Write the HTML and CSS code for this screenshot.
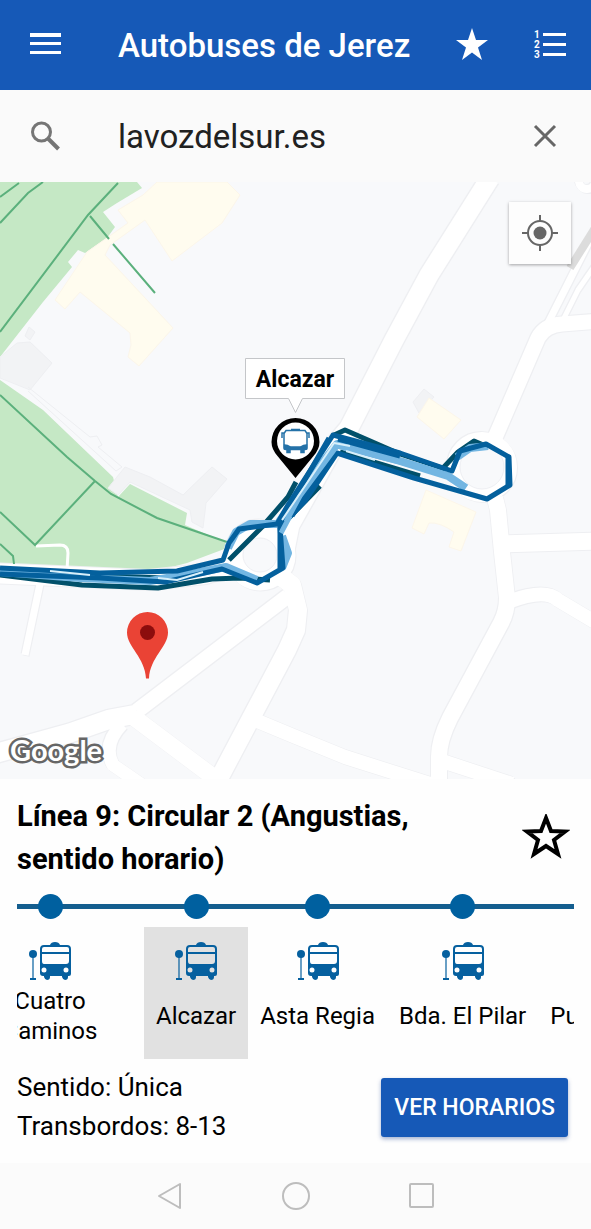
FILE: index.html
```html
<!DOCTYPE html>
<html lang="es">
<head>
  <meta charset="UTF-8">
  <meta name="viewport" content="width=device-width, initial-scale=1.0">
  <title>Autobuses de Jerez</title>
  <link rel="stylesheet" href="styles.css">
</head>
<body>
  <!-- Shared icons -->
  <svg class="sprite" aria-hidden="true">
    <symbol id="bus-stop" viewBox="0 0 42 38">
      <circle cx="4" cy="12" r="4"/>
      <path d="M3.400 14h1.200v22h-1.200zM1 36h6v2H1z"/>
      <path fill-rule="evenodd" d="M21 3q1-3 5-3t5 3h7q4 0 4 4v25q0 2-2 2h-1v1q0 3-3 3-2 0-3-3v-1H21v1q0 3-3 3-2 0-3-3v-1h-1q-3 0-3-3V7q0-4 4-4zM15 5q-2 0-2 2v3h27V7q0-2-2-2zM13 12v7q0 3 2 3h22q3 0 3-3v-7zM15 25.500a2.500 2.500 0 1 0 0 5 2.500 2.500 0 0 0 0-5zM37 25.500a2.500 2.500 0 1 0 0 5 2.500 2.500 0 0 0 0-5z"/>
    </symbol>
  </svg>

  <div class="app">
    <header class="topbar">
      <button type="button" class="icon-btn" aria-label="Menú">
        <svg width="32" height="32" viewBox="0 0 32 32"><path fill="currentColor" d="M0 4h31v4H0zM0 13h31v3H0zM0 22h31v3H0z"/></svg>
      </button>
      <h1>Autobuses de Jerez</h1>
      <button type="button" class="icon-btn" aria-label="Favoritos">
        <svg width="34" height="34" viewBox="0 1 34 34"><path fill="currentColor" d="M17 1l4 12 12 0-10 7.500 4 12.500-10-7.600L7 33l4-12.500L1 13h12z"/></svg>
      </button>
      <button type="button" class="icon-btn" aria-label="Líneas">
        <svg width="34" height="32" viewBox="0 1 34 32">
          <path fill="currentColor" d="M10 5h23v3H10zM10 15h23v3H10zM10 25h23v3H10z"/>
          <g class="list-digits"><text x="1" y="10">1</text><text x="1" y="20">2</text><text x="1" y="30">3</text></g>
        </svg>
      </button>
    </header>

    <form class="search">
      <label for="search" aria-label="Buscar">
        <svg width="32" height="32" viewBox="0 0 32 32" fill="none" stroke="#757575" stroke-width="3"><circle cx="11.500" cy="12" r="9"/><path stroke-width="4" d="M18 18.500l10.500 10.500"/></svg>
      </label>
      <input type="text" id="search" value="lavozdelsur.es">
      <button type="button" class="icon-btn" aria-label="Borrar">
        <svg width="24" height="24" viewBox="0 0 24 24" fill="none" stroke="#666" stroke-width="3"><path d="M2 2l20 20M22 2L2 22"/></svg>
      </button>
    </form>

    <main class="map">
      <svg class="map-canvas" viewBox="0 182 591 597" preserveAspectRatio="xMidYMid slice" role="img" aria-label="Mapa de la línea">
        <defs>
          <g id="roads">
            <path stroke-width="19" d="M490 178L429 275 394 340 349 428 334 446 290 525 283 560"/>
            <path stroke-width="18" d="M275 572L292 585 298 610 296 630 287 650 250 720 213 790"/>
            <path stroke-width="15" d="M288 596L137 711"/>
            <path stroke-width="19" d="M137 714L110 719 70 733-10 755"/>
            <path stroke-width="17" d="M132 716L212 776"/>
            <path stroke-width="13" d="M122 724Q102 745 113 765L145 787"/>
            <path stroke-width="14" d="M255 720L291 735 345 757 430 784"/>
            <path stroke-width="15" d="M494 440L538 338Q545 325 562 324L600 321"/>
            <path stroke-width="16" d="M495 498L498 510 502 552 507 598Q507 612 501 623L450 718Q439 740 439 757V790"/>
            <path stroke-width="17" d="M502 544L600 541"/>
            <path stroke-width="14" d="M508 602Q545 588 558 600L600 625"/>
            <path stroke-width="14" d="M442 761L512 784"/>
            <path stroke-width="7" d="M547 325L595 230M40 584L25 655"/>
            <path stroke-width="5" d="M564 318L578 290 600 258"/>
            <path stroke-width="20" d="M-10 573L150 580 205 574 240 563"/>
            <circle cx="260" cy="555" r="26" stroke-width="19"/>
            <circle cx="482" cy="467" r="28" stroke-width="14"/>
            <circle cx="587" cy="181" r="8" stroke-width="8"/>
          </g>
        </defs>

        <rect class="land" y="182" width="591" height="597"/>

        <!-- Parks and paths -->
        <g class="park">
          <path d="M0 182H137L142 188 117 203 103 212 115 227 107 238 85 253 78 250 68 262 72 267 43 302 0 357z"/>
          <path d="M0 380L43 410 113 477 118 497 130 484 187 513 185 525 227 543 227 548 187 563 160 570 0 566z"/>
        </g>

        <!-- Buildings -->
        <g class="block">
          <path d="M0 357L17 343 30 342 52 363 30 390 0 378zM25 336L29 327 35 332 30 340z"/>
          <path d="M108 488L125 467 150 477 183 495 212 467 227 479 206 503 203 528 192 522 190 510 130 482 118 495z"/>
          <path d="M413 402L424 389 434 397 419 413z"/>
          <path class="wall" d="M28 387L90 437 97 436 102 445 98 447 122 467 116 471 28 391"/>
        </g>
        <g class="building">
          <path d="M157 182H227L240 195 222 223 172 261 145 220 110 245 105 255 173 328 139 366 128 357 131 345 130 333 80 292 65 309 55 300 87 252 128 223 118 210 143 195z"/>
          <path d="M429 398L461 420 444 439 417 417z"/>
          <path d="M426 490L476 512 461 551 449 547 454 532 Q440 522 429 523L424 534 412 528z"/>
        </g>

        <use href="#roads" class="road-edge"/>
        <use href="#roads" class="road-edge shift"/>
        <use href="#roads" class="road"/>
        <g class="island"><circle cx="260" cy="555" r="17"/><circle cx="482" cy="467" r="22"/></g>
        <path class="service" d="M595 228L570 268"/>
        <path class="track" d="M36 546L60 545Q68 545 68 553L67 570"/>
        <path class="walk" d="M0 197L19 183M0 223L28 193 43 182M118 183L88 215 0 332M90 216L109 239M113 244L155 293M0 395L67 457 95 481 111 494 157 518 227 542M95 481L35 545 0 512M0 544L13 556 14 564"/>

        <!-- Bus routes -->
        <g class="route">
          <path class="deep" d="M0 575L82 585 158 588 212 579 240 578 270 580M229 560L262 527 288 497 296 482M332 436L345 430 400 454 445 469M443 468L458 452 474 441 488 447M100 576L165 578M340 452L420 476M320 486L280 527"/>
          <path class="light wide" d="M0 572L80 578 150 581 190 574 226 567 257 580M282 568L288 553 282 536M279 522L304 486 337 444 400 461 448 476 466 488M228 548L236 532 250 524 277 524M457 457L470 448 488 446"/>
          <path d="M0 568L100 573 177 571 223 560 229 543 239 529 277 524 288 505 333 435 400 453 452 471 460 451 486 444 509 457 510 485 487 499 414 478 337 453 305 501 280 527 283 568 257 583 222 569 165 582 100 578 0 574"/>
          <path d="M290 506L329 438M338 439L400 456M292 516L335 450M280 520V568M508 455V486"/>
          <path class="light" d="M286 522L300 496 337 446 400 462 450 476M281 533L290 516"/>
          <path class="thread" d="M282 520L334 443 350 446M346 451L375 460M158 578L177 580 203 572M50 571L90 575"/>
        </g>

        <!-- Searched place -->
        <g>
          <path fill="#ea4335" d="M147.500 612a20.500 20.500 0 0 1 20.500 20.500c0 14-18 25-19 46h-3c-1-21-19-32-19-46a20.500 20.500 0 0 1 20.500-20.500z"/>
          <circle cx="147.500" cy="632.500" r="7.500" fill="#8c0d0d"/>
        </g>

        <!-- Selected stop -->
        <g>
          <path d="M295.500 418a24 24 0 0 1 24 24q0 7-6 14l-18 22-18-22q-6-7-6-14a24 24 0 0 1 24-24z"/>
          <circle cx="295.500" cy="441" r="18.500" fill="#fff"/>
          <g fill="none" stroke="#2472a8" stroke-width="1.500">
            <path d="M286 430.500h19l2 3v14q0 2-2 2h-19q-2 0-2-2v-14zM291 429.500h9M284 433h-2v5M307 433h2v5"/>
            <path fill="#2472a8" d="M284.500 445q3 0 6 2h10q3-2 6-2v4h-22zM287 450h3v2.500h-3zM301 450h3v2.500h-3z"/>
          </g>
          <path class="callout" d="M245.500 358.500h99v40h-42l-7 14-7-14h-43z"/>
          <text class="callout-text" x="295" y="387">Alcazar</text>
        </g>
      </svg>
      <button type="button" class="locate" aria-label="Mi ubicación">
        <svg width="36" height="36" viewBox="0 0 36 36" fill="none" stroke="#666" stroke-width="2"><circle cx="18" cy="18" r="12"/><circle cx="18" cy="18" r="6.500" fill="#666" stroke="none"/><path d="M18 0v6M18 30v6M0 18h6M30 18h6"/></svg>
      </button>
      <span class="map-brand">Google</span>
    </main>

    <section class="panel">
      <div class="line-head">
        <h2>Línea 9: Circular 2 (Angustias, sentido horario)</h2>
        <button type="button" class="icon-btn" aria-label="Añadir a favoritos">
          <svg width="48" height="48" viewBox="0 2 48 48" fill="none" stroke="#000" stroke-width="4"><path d="M24 6l5 13 14 .5-11 8.500 4 14-12-8-12 8 4-14-11-8.500L19 19z"/></svg>
        </button>
      </div>

      <div class="stops">
        <ol>
          <li class="stop-far">
            <span class="dot"></span>
            <a href="#"><svg class="bus"><use href="#bus-stop"/></svg><span class="name">Cuatro<br>Caminos</span></a>
          </li>
          <li>
            <span class="dot"></span>
            <a href="#" class="selected"><svg class="bus"><use href="#bus-stop"/></svg><span class="name">Alcazar</span></a>
          </li>
          <li>
            <span class="dot"></span>
            <a href="#"><svg class="bus"><use href="#bus-stop"/></svg><span class="name">Asta Regia</span></a>
          </li>
          <li>
            <span class="dot"></span>
            <a href="#"><svg class="bus"><use href="#bus-stop"/></svg><span class="name">Bda. El Pilar</span></a>
          </li>
          <li>
            <span class="dot"></span>
            <a href="#"><svg class="bus"><use href="#bus-stop"/></svg><span class="name">Puerta del Sur</span></a>
          </li>
        </ol>
      </div>

      <div class="line-foot">
        <div>
          <p>Sentido: Única</p>
          <p>Transbordos: 8-13</p>
        </div>
        <button type="button" class="primary">VER HORARIOS</button>
      </div>
    </section>

    <nav class="sysbar">
      <button type="button" aria-label="Atrás"><svg width="28" height="28" viewBox="0 0 28 28"><path d="M24 2v24L3 14z"/></svg></button>
      <button type="button" aria-label="Inicio"><svg width="28" height="28" viewBox="0 0 28 28"><circle cx="14" cy="14" r="13"/></svg></button>
      <button type="button" aria-label="Recientes"><svg width="28" height="28" viewBox="0 0 28 28"><rect x="2" y="2" width="23" height="23" rx="1"/></svg></button>
    </nav>
  </div>
</body>
</html>
```

FILE: styles.css
```css
* {
  box-sizing: border-box;
}
body {
  margin: 0;
  font-family: Roboto, "Liberation Sans", sans-serif;
  color: #000;
  background-color: #fefefe;
}
h1, h2, p, ol {
  margin: 0;
  padding: 0;
}
button, input {
  font-family: inherit;
}
svg {
  display: block;
}
.sprite {
  display: none;
}
.app {
  display: flex;
  flex-direction: column;
  min-height: 100vh;
}
.icon-btn {
  padding: 0;
  border: none;
  background: none;
  color: inherit;
  cursor: pointer;
}

/* top bar */
.topbar {
  display: flex;
  align-items: center;
  height: 90px;
  padding: 0 24px 0 30px;
  background-color: #1659b7;
  color: #fff;
}
.topbar h1 {
  flex: 1;
  margin-left: 56px;
  font-size: 33px;
  font-weight: 500;
}
.topbar h1 + .icon-btn {
  margin-right: 44px;
}
.list-digits {
  fill: #fff;
  font-size: 10px;
  font-weight: 700;
}

/* search */
.search {
  display: flex;
  align-items: center;
  height: 92px;
  padding: 0 34px 0 30px;
  background-color: #fafafa;
}
.search input {
  flex: 1;
  min-width: 0;
  margin-left: 56px;
  padding: 0;
  border: none;
  outline: none;
  background: none;
  font-size: 33px;
  color: #212121;
}

/* map */
.map {
  position: relative;
  flex: 1;
  min-height: 400px;
  overflow: hidden;
}
.map-canvas {
  position: absolute;
  width: 100%;
  height: 100%;
}
.land {
  fill: #f8f9fb;
}
.park {
  fill: #c5e8c5;
}
.block {
  fill: #f2f3f5;
  stroke: #eeeff2;
}
.block .wall {
  fill: none;
}
.building {
  fill: #fffcef;
  stroke: #fcf6ea;
}
.road {
  fill: none;
  stroke: #fff;
  stroke-linejoin: round;
}
.road-edge {
  fill: none;
  stroke: #eeeff2;
  stroke-linejoin: round;
  transform: translate(-1px, -1px);
}
.road-edge.shift {
  transform: translate(1px, 1px);
}
.island {
  fill: #f8f9fb;
  stroke: #eeeff3;
}
.service {
  stroke: #dcdcdc;
  stroke-width: 8;
}
.track {
  fill: none;
  stroke: #fff;
  stroke-width: 3;
}
.walk {
  fill: none;
  stroke: #5bb07c;
  stroke-width: 2;
}
.route {
  fill: none;
  stroke: #04609d;
  stroke-width: 5;
  stroke-linejoin: round;
}
.route .deep {
  stroke: #01506a;
}
.route .light {
  stroke: #73b6e2;
}
.route .wide {
  stroke-width: 8;
}
.route .thread {
  stroke: #d8effa;
  stroke-width: 2;
}
.callout {
  fill: #fff;
  stroke: #c4c6c9;
}
.callout-text {
  font-size: 23px;
  font-weight: 700;
  text-anchor: middle;
}
.locate {
  position: absolute;
  top: 20px;
  right: 20px;
  display: grid;
  place-items: center;
  width: 62px;
  height: 62px;
  padding: 0;
  border: none;
  background-color: #fdfdfd;
  box-shadow: 0 1px 3px rgba(0, 0, 0, 0.35);
}
.map-brand {
  position: absolute;
  left: 10px;
  bottom: 9px;
  font-family: Lato, sans-serif;
  font-size: 29px;
  line-height: 40px;
  font-weight: 700;
  color: #fff;
  paint-order: stroke fill;
  -webkit-text-stroke: 5px #666;
}

/* line panel */
.panel {
  padding: 16px 17px 17px;
}
.line-head {
  display: flex;
  align-items: center;
  justify-content: space-between;
  gap: 24px;
  padding-right: 4px;
}
.line-head h2 {
  max-width: 440px;
  font-size: 29px;
  line-height: 43px;
  font-weight: 700;
}
.stops {
  margin-top: 13px;
  overflow: hidden;
  background: linear-gradient(#145e8f, #145e8f) 0 10px / 100% 5px no-repeat;
}
.stops ol {
  display: flex;
  margin-left: -61px;
  list-style: none;
}
.stops li {
  flex: none;
}
.stop-far {
  width: 188px;
}
.dot {
  display: block;
  width: 25px;
  height: 25px;
  margin: 0 auto 8px;
  border-radius: 50%;
  background-color: #00609f;
}
.stops a {
  display: flex;
  flex-direction: column;
  align-items: center;
  gap: 6px;
  padding: 15px 12px 13px;
  color: #000;
  text-decoration: none;
}
.stops a.selected {
  background-color: #e1e1e1;
}
.bus {
  width: 42px;
  height: 38px;
  fill: #06609f;
}
.name {
  display: flex;
  align-items: center;
  min-height: 60px;
  font-size: 24px;
  line-height: 30px;
  text-align: center;
  white-space: nowrap;
}
.line-foot {
  display: flex;
  align-items: center;
  justify-content: space-between;
  padding: 9px 6px 0 0;
  font-size: 26px;
  line-height: 39px;
}
.primary {
  height: 59px;
  padding: 0 13px;
  border: none;
  border-radius: 3px;
  background-color: #1659b7;
  color: #fff;
  font-size: 23px;
  font-weight: 500;
  box-shadow: 0 2px 4px rgba(22, 60, 140, 0.4);
  cursor: pointer;
}

/* system bar */
.sysbar {
  display: flex;
  justify-content: center;
  height: 66px;
  background-color: #fbfbfb;
}
.sysbar button {
  display: grid;
  place-items: center;
  width: 126px;
  padding: 0;
  border: none;
  background: none;
}
.sysbar svg {
  fill: none;
  stroke: #bdbdbd;
  stroke-width: 2;
  stroke-linejoin: round;
}
```
